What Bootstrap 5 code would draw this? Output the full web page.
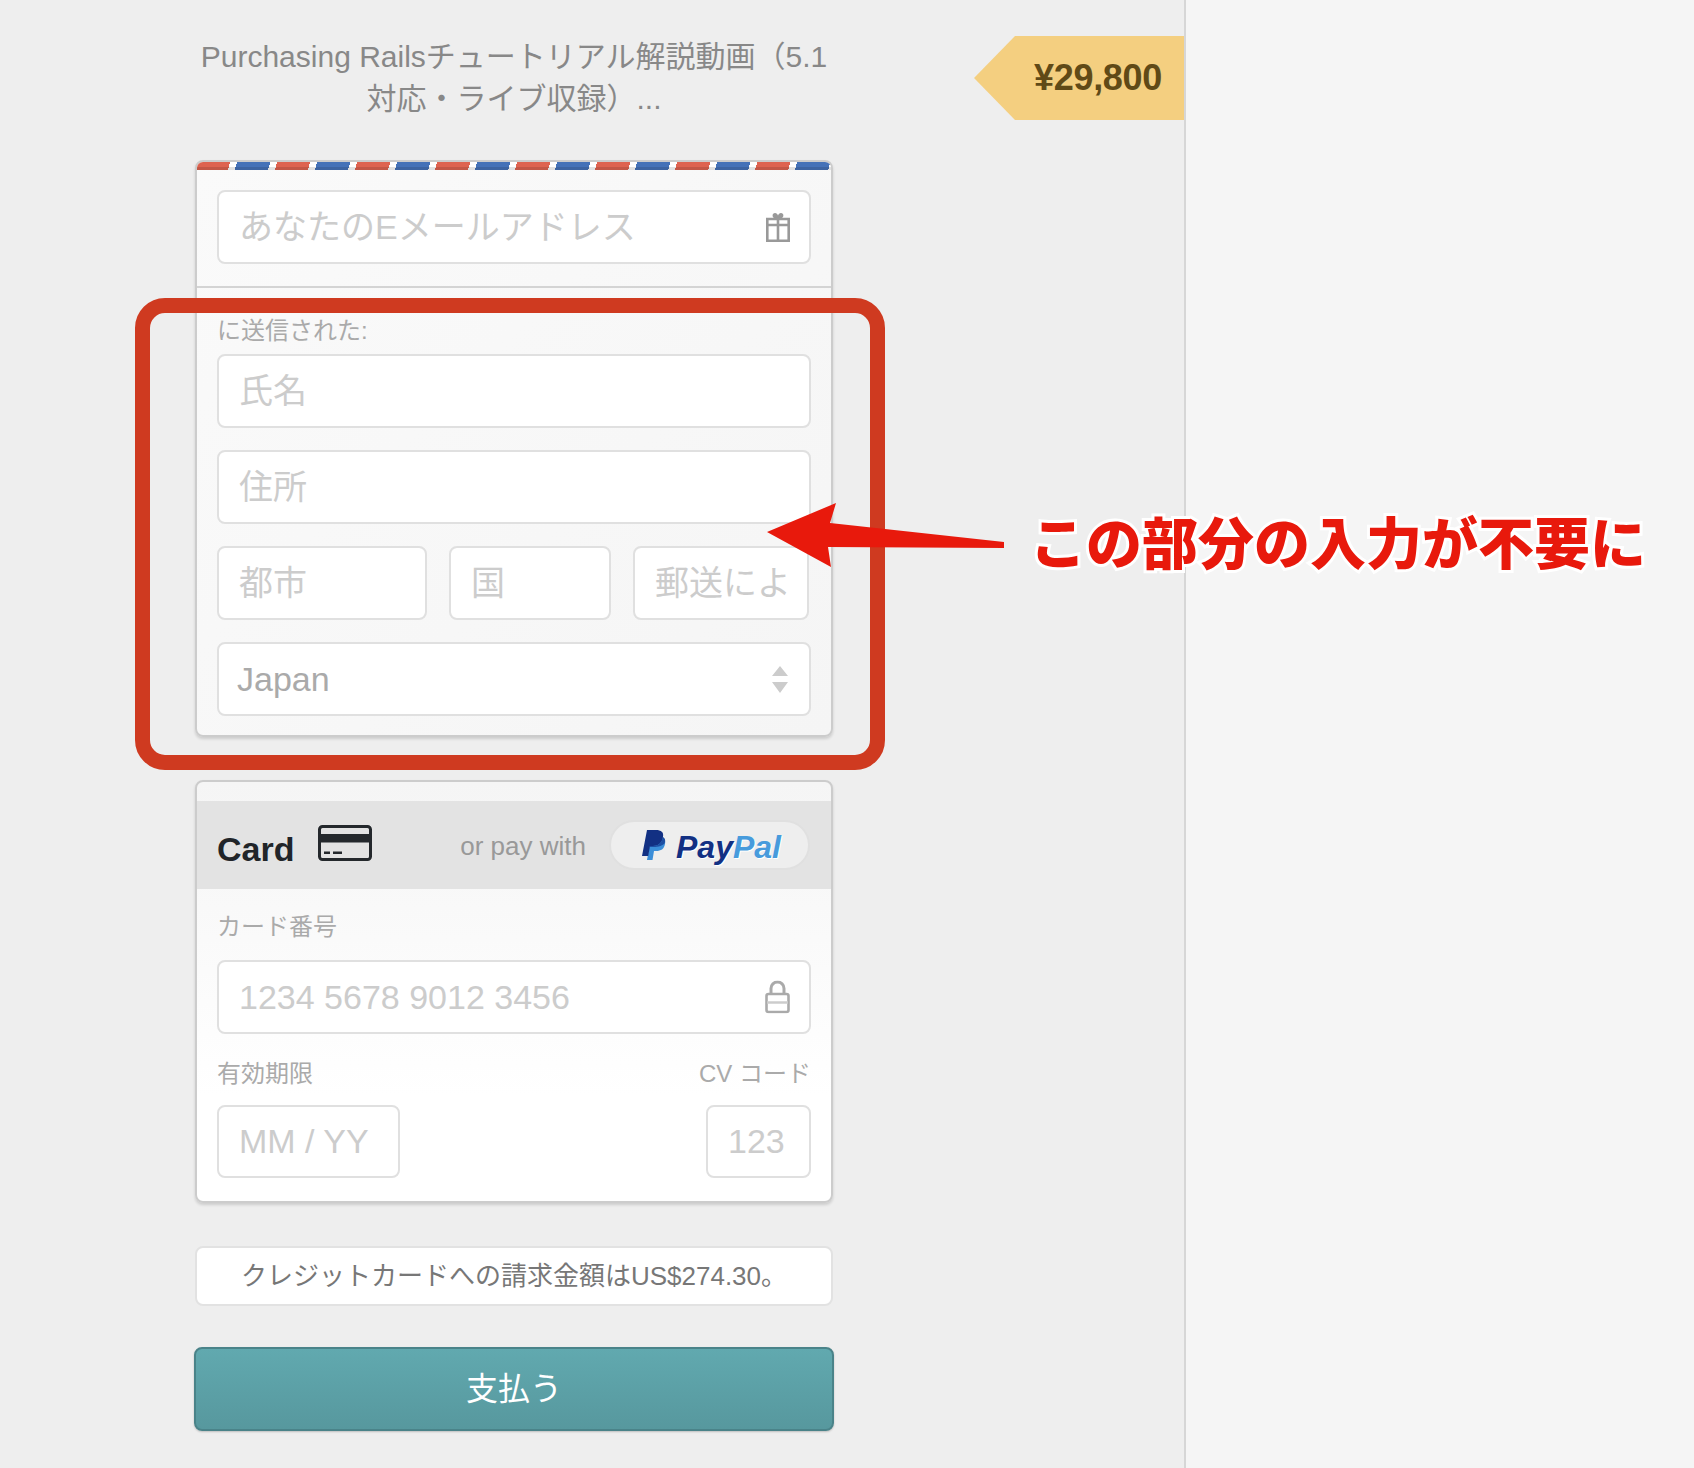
<!DOCTYPE html>
<html lang="ja">
<head>
<meta charset="utf-8">
<title>Checkout</title>
<link rel="stylesheet" href="https://cdn.jsdelivr.net/npm/bootstrap@5.3.0/dist/css/bootstrap.min.css">
<style>
html,body{height:100%;overflow:hidden}
body{background:#f5f5f5;font-family:"Liberation Sans","Noto Sans CJK JP",sans-serif;position:relative}
.side-panel{width:1186px;height:100vh;background:#eee;border-right:2px solid #d6d6d6;padding:36px 0 0 195px}
.pay-col{width:638px}
.item-title{font-size:30px;line-height:42px;color:#888;text-align:center;margin:0 0 40px}
.price-tag{position:absolute;left:974px;top:36px;width:210px;height:84px;background:#f4cf80;clip-path:polygon(0 50%,41px 0,100% 0,100% 100%,41px 100%);color:#604a17;font-weight:700;font-size:36px;line-height:84px;text-align:right;padding-right:22px;letter-spacing:-.3px}
.pay-card{border:2px solid #ccc;border-radius:8px;box-shadow:0 2px 3px rgba(0,0,0,.14);background:linear-gradient(135deg,#fafafa,#f5f5f5);overflow:hidden}
.air-stripe{height:8px;background:linear-gradient(to bottom,transparent 5px,rgba(0,0,0,.12) 5px),repeating-linear-gradient(105deg,#de6350 0,#de6350 32px,#fff 32px,#fff 38.6px,#4572b8 38.6px,#4572b8 70.7px,#fff 70.7px,#fff 77.3px)}
.sec-top{padding:20px 20px 22px;border-bottom:2px solid #d4d4d4}
.sec-ship{padding:28px 20px 19px}
.field-label{font-size:24px;line-height:30px;color:#aaa;margin:0}
.pay-input.form-control,.pay-input.form-select{height:74px;font-size:34px;line-height:1.2;border:2px solid #e0e0e0;border-radius:8px;padding:0 20px;color:#aaa;background-color:#fff;box-shadow:none}
.pay-input.form-control::placeholder{color:#ccc;opacity:1}
.pay-input.form-select{padding-left:18px;background-image:url("data:image/svg+xml,%3Csvg xmlns='http://www.w3.org/2000/svg' width='16' height='27'%3E%3Cpath fill='%23ccc' d='M8 0l8 10H0zM0 16h16l-8 11z'/%3E%3C/svg%3E");background-size:16px 27px;background-position:right 21px center}
.w-city{width:210px}.w-state{width:162px}.w-zip{width:176px}
.w-exp{width:183px;height:73px!important}.w-cvc{width:105px;height:73px!important}
.w-cvc::placeholder{}
.input-icon{position:absolute;right:21px;top:50%;transform:translateY(-50%);filter:blur(.5px)}
.gap-field{gap:22px}
.pay-second{margin-top:43px;background:linear-gradient(to bottom,#f5f5f5,#fff 75%)}
.head-spacer{height:19px}
.pay-head{height:88px;background:#e3e3e3;padding:0 21px 0 20px}
.card-word{font-size:34px;font-weight:700;color:#212529;line-height:1;padding-top:8px}
.card-glyph{margin-left:24px;margin-top:-4px}
.or-pay{font-size:26px;color:#999;margin-left:auto;margin-right:23px;padding-top:3px}
.pp-pill{width:201px;height:50px;background:#eee;border:2px solid #e0e0e0;border-radius:25px;gap:10px;padding-left:31px}
.pp-word{font-size:32px;font-weight:700;font-style:italic;line-height:1;color:#123083;text-shadow:1px 1px 0 #fff;padding-top:4px;white-space:nowrap}
.pp-word span{color:#479bdc}
.sec-card{padding:23px 20px 23px}
.mb-18{margin-bottom:18px}.mb-16{margin-bottom:16px}.mt-25{margin-top:25px}
.note-box{margin-top:43px;height:60px;background:#fff;border:2px solid #e2e2e2;border-radius:8px;font-size:26px;line-height:56px;color:#777;text-align:center;white-space:nowrap}
.pay-btn.btn{display:block;margin:41px -1px 0;width:640px;height:84px;background:linear-gradient(to bottom,#61a9af,#57989e);border:2px solid #4a8389;border-radius:8px;color:#fff;font-size:32px;box-shadow:0 1px 2px rgba(0,0,0,.2);padding:0}
.red-frame{position:absolute;left:135px;top:298px;width:750px;height:472px;border:15px solid #cf3a20;border-radius:30px;pointer-events:none}
.red-arrow{position:absolute;left:760px;top:495px}
.anno-text{position:absolute;left:1030px;top:503px;font-family:"Noto Sans CJK JP",sans-serif;font-weight:900;font-size:56px;line-height:74px;color:#e8190c;-webkit-text-stroke:6px #fff;paint-order:stroke fill;white-space:nowrap}
</style>
</head>
<body>
<div class="side-panel">
  <div class="pay-col">
    <p class="item-title">Purchasing Railsチュートリアル解説動画（5.1<br>対応・ライブ収録）...</p>

    <form class="card pay-card">
      <div class="air-stripe"></div>
      <div class="sec-top">
        <div class="position-relative">
          <input class="form-control pay-input" type="text" placeholder="あなたのEメールアドレス">
          <svg class="input-icon" width="24" height="30" viewBox="0 0 24 30"><path fill="#999" d="M8 6c-2-1-2-5 1-5 1.500 0 2.500 1 3 2.500C12.500 2 13.500 1 15 1c3 0 3 4 1 5z"/><path fill="none" stroke="#999" stroke-width="2.600" d="M1.300 7h21.400v21.700H1.300zM1.300 13h21.400M12 7v21.700"/></svg>
        </div>
      </div>
      <div class="sec-ship">
        <p class="field-label mb-2">に送信された:</p>
        <div class="d-flex flex-column gap-field">
          <input class="form-control pay-input" type="text" placeholder="氏名">
          <input class="form-control pay-input" type="text" placeholder="住所">
          <div class="d-flex gap-field">
            <input class="form-control pay-input w-city" type="text" placeholder="都市">
            <input class="form-control pay-input w-state" type="text" placeholder="国">
            <input class="form-control pay-input w-zip" type="text" placeholder="郵送によ">
          </div>
          <select class="form-select pay-input"><option>Japan</option></select>
        </div>
      </div>
    </form>

    <form class="card pay-card pay-second">
      <div class="head-spacer"></div>
      <div class="pay-head d-flex align-items-center">
        <span class="card-word">Card</span>
        <svg class="card-glyph" width="54" height="36" viewBox="0 0 54 36"><rect x="1.500" y="1.500" width="51" height="33" rx="3" fill="none" stroke="#24282c" stroke-width="3"/><rect x="2" y="9" width="50" height="8.500" fill="#24282c"/><path fill="#24282c" d="M6 26.500h6V29H6zM15 26.500h9V29h-9z"/></svg>
        <span class="or-pay">or pay with</span>
        <span class="pp-pill d-flex align-items-center">
          <svg width="24" height="31" viewBox="0 0 24 31"><path fill="#3b8ed8" d="M9 7h9c4 0 6 3 5 7-1 5-4 7-9 7h-2l-1.500 9H5z"/><path fill="#123083" d="M5 0h9c5 0 8 2 7 7-1 6-5 9-10 9H8l-1.800 10H0z"/><path fill="#1e4fa3" d="M8 16h3c5 0 9-3 10-9 2 1 2.500 3 2 5l-.500 1.500c-3 3-8 3.500-13 3.500H7.800z"/></svg>
          <span class="pp-word">Pay<span>Pal</span></span>
        </span>
      </div>
      <div class="sec-card">
        <p class="field-label mb-18">カード番号</p>
        <div class="position-relative">
          <input class="form-control pay-input" type="text" placeholder="1234 5678 9012 3456">
          <svg class="input-icon" width="25" height="33" viewBox="0 0 25 33"><path fill="none" stroke="#aaa" stroke-width="3" d="M6 14V8a6.500 6.500 0 0 1 13 0v6"/><rect x="1.500" y="13.500" width="22" height="18" rx="2" fill="none" stroke="#aaa" stroke-width="2.600"/><path stroke="#ccc" stroke-width="2.500" d="M2 22h21"/></svg>
        </div>
        <div class="d-flex justify-content-between mt-25 mb-16">
          <span class="field-label">有効期限</span>
          <span class="field-label">CV コード</span>
        </div>
        <div class="d-flex justify-content-between">
          <input class="form-control pay-input w-exp" type="text" placeholder="MM / YY">
          <input class="form-control pay-input w-cvc" type="text" placeholder="123">
        </div>
      </div>
    </form>

    <div class="note-box">クレジットカードへの請求金額はUS$274.30。</div>
    <button class="btn pay-btn" type="button">支払う</button>
  </div>
</div>

<div class="price-tag">¥29,800</div>
<div class="red-frame"></div>
<svg class="red-arrow" width="250" height="80" viewBox="0 0 250 80"><path fill="#e8190c" d="M7 37L76 8 70 28 244 47V53L68 52 71 72z"/></svg>
<div class="anno-text">この部分の入力が不要に</div>
</body>
</html>
